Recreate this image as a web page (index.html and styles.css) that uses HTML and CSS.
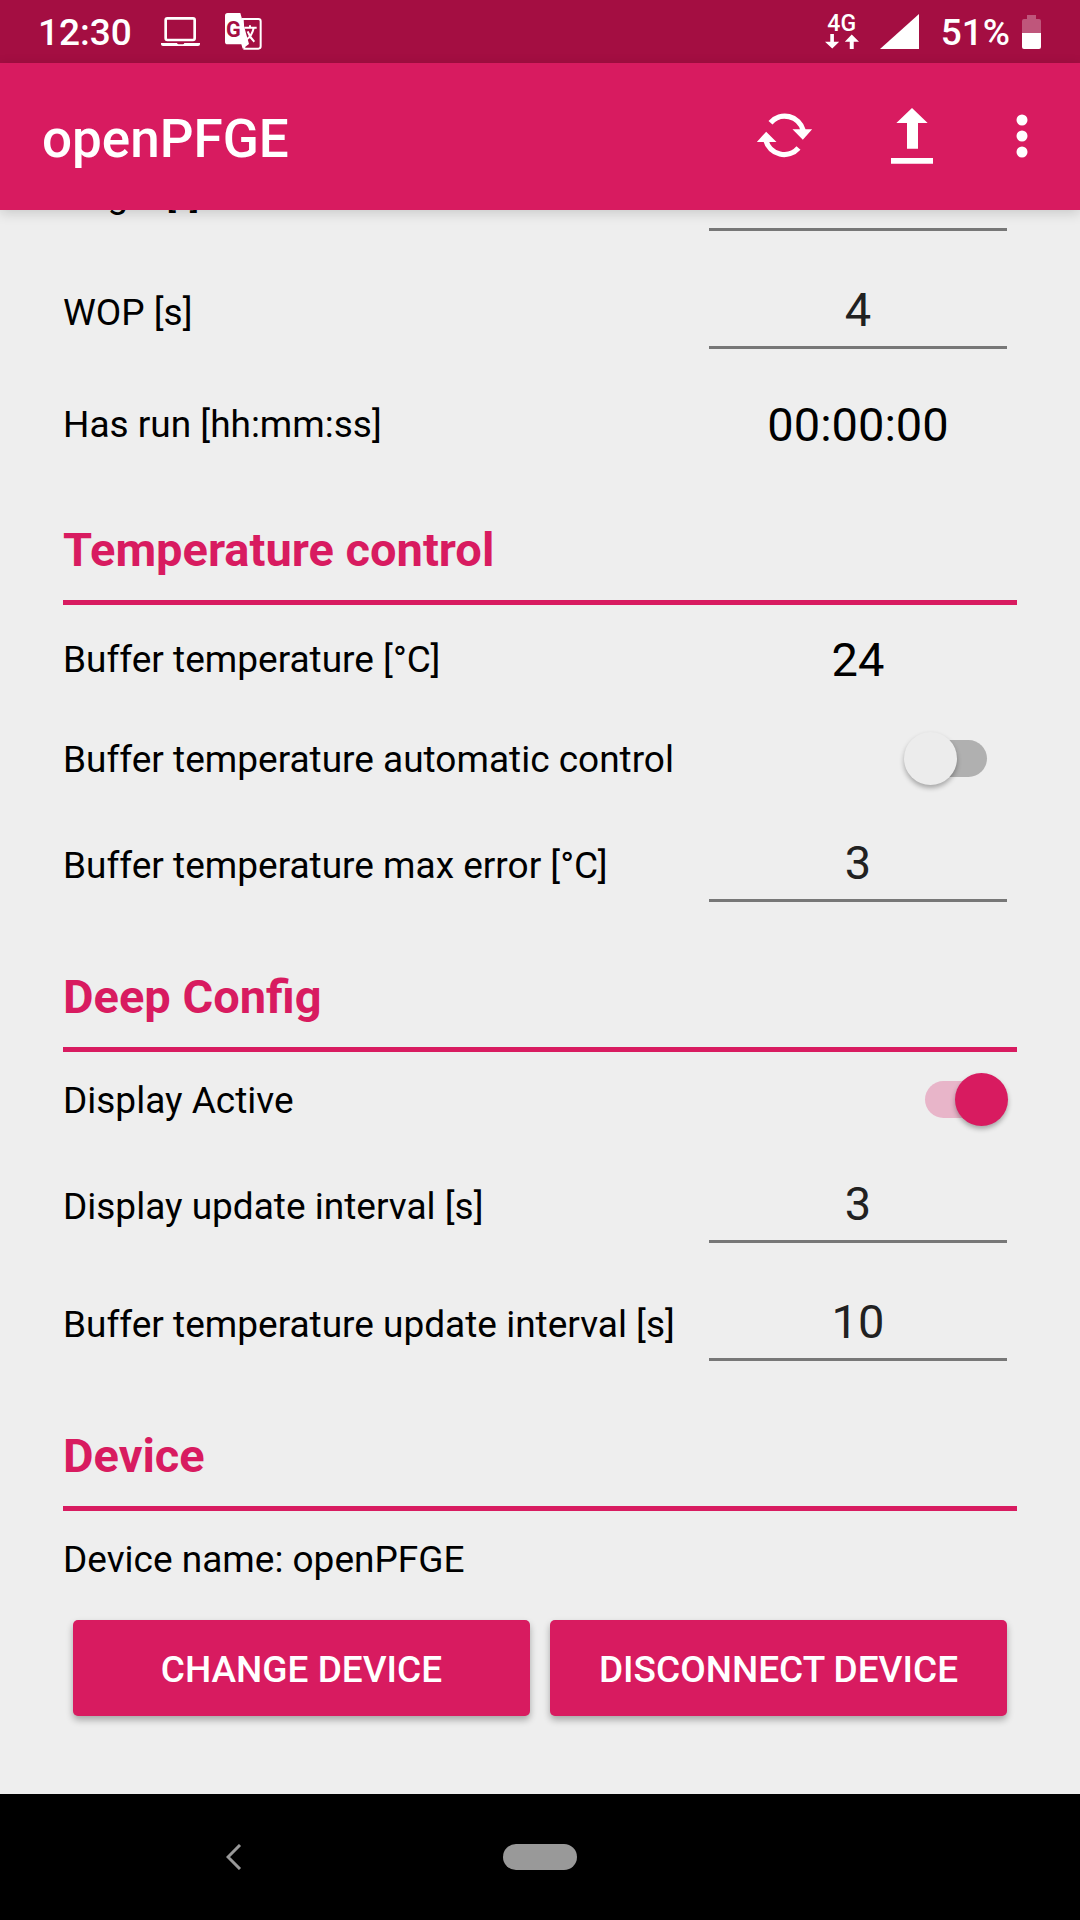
FILE: index.html
```html
<!DOCTYPE html>
<html lang="en">
<head>
<meta charset="utf-8">
<meta name="viewport" content="width=device-width, initial-scale=1">
<title>openPFGE</title>
<link rel="stylesheet" href="styles.css">
</head>
<body>
<div class="status">
  <span class="clock">12:30</span>
  <svg class="laptop" width="39" height="31" viewBox="483 48 117 93" aria-hidden="true">
    <rect x="497" y="55" width="87" height="65" rx="5" fill="none" stroke="#fff" stroke-width="8"/>
    <path d="M483 129h48q1 4 5 4h12q4 0 5-4h47v4q0 5-6 5H489q-6 0-6-5z" fill="#fff"/>
  </svg>
  <svg class="translate" width="37" height="37" viewBox="675 39 111 111" aria-hidden="true">
    <path d="M728 57h47q7 0 7 7v75q0 7-7 7h-42z" fill="none" stroke="#fff" stroke-width="6"/>
    <path d="M683 39h38l26 93-19 14-4-13h-41q-8 0-8-8V47q0-8 8-8z" fill="#fff"/>
    <path d="M733 83h37M750 76v7M761 84q-5 24-22 35M743 94q6 18 20 31" fill="none" stroke="#fff" stroke-width="6"/>
    <text class="translate-g" x="678" y="112">G</text>
  </svg>
  <div class="network">
    <span>4G</span>
    <svg width="34" height="15" viewBox="318 99 103 45" fill="#fff" aria-hidden="true">
      <path d="M334 99h11v23h16l-21 21-22-21h16zM393 144h12v-22h16l-22-22-21 22h15z"/>
    </svg>
  </div>
  <svg class="signal" width="39" height="35" viewBox="0 0 39 35" fill="#fff" aria-hidden="true"><path d="M39 0v35H0z"/></svg>
  <span class="percent">51%</span>
  <svg width="19" height="34" viewBox="0 0 19 34" fill="#fff" aria-hidden="true">
    <path d="M5 0h9v4h3q2 0 2 2v12H0V6q0-2 2-2h3z" opacity=".3"/>
    <path d="M0 18h19v14q0 2-2 2H2q-2 0-2-2z"/>
  </svg>
</div>
<header class="appbar">
  <h1 class="title">openPFGE</h1>
  <button class="action" type="button" aria-label="Refresh">
    <svg width="57" height="45" viewBox="108 337 170 135" aria-hidden="true">
      <path d="M151 366A57 57 0 0 1 249 389M235 442A57 57 0 0 1 137 419" fill="none" stroke="#fff" stroke-width="16"/>
      <path d="M217 386h59l-28 31zM169 424h-59l28-31z" fill="#fff"/>
    </svg>
  </button>
  <button class="action" type="button" aria-label="Upload">
    <svg width="42" height="56" viewBox="513 324 126 168" fill="#fff" aria-hidden="true">
      <path d="M576 324l47 45h-29v77h-33v-77h-32zM513 474h126v17H513z"/>
    </svg>
  </button>
  <button class="action more" type="button" aria-label="More options">
    <svg width="12" height="44" viewBox="0 0 12 44" fill="#fff" aria-hidden="true">
      <circle cx="6" cy="6" r="5.5"/><circle cx="6" cy="22" r="5.5"/><circle cx="6" cy="38" r="5.5"/>
    </svg>
  </button>
</header>
<main class="settings">
  <section class="pulse">
    <div class="row field"><label class="label" for="angle">Angle [°]</label><input class="entry" id="angle" type="text" inputmode="numeric"></div>
    <div class="row field"><label class="label" for="wop">WOP [s]</label><input class="entry" id="wop" type="text" inputmode="numeric" value="4"></div>
    <div class="row"><span class="label">Has run [hh:mm:ss]</span><output class="value">00:00:00</output></div>
  </section>
  <section>
    <h2 class="heading">Temperature control</h2>
    <div class="row"><span class="label">Buffer temperature [°C]</span><output class="value">24</output></div>
    <div class="row toggle"><label class="label" for="auto">Buffer temperature automatic control</label><input class="switch" id="auto" type="checkbox" role="switch"></div>
    <div class="row field"><label class="label" for="error">Buffer temperature max error [°C]</label><input class="entry" id="error" type="text" inputmode="numeric" value="3"></div>
  </section>
  <section>
    <h2 class="heading">Deep Config</h2>
    <div class="row toggle"><label class="label" for="display">Display Active</label><input class="switch" id="display" type="checkbox" role="switch" checked></div>
    <div class="row field"><label class="label" for="update">Display update interval [s]</label><input class="entry" id="update" type="text" inputmode="numeric" value="3"></div>
    <div class="row field"><label class="label" for="buffer">Buffer temperature update interval [s]</label><input class="entry" id="buffer" type="text" inputmode="numeric" value="10"></div>
  </section>
  <section>
    <h2 class="heading">Device</h2>
    <div class="row toggle"><p class="label">Device name: openPFGE</p></div>
    <div class="buttons">
      <button class="raised" type="button">CHANGE DEVICE</button>
      <button class="raised" type="button">DISCONNECT DEVICE</button>
    </div>
  </section>
</main>
<nav class="navbar" aria-label="System">
  <button class="nav-button" type="button" aria-label="Back">
    <svg width="16" height="26" viewBox="0 0 16 26" fill="none" stroke="#999" stroke-width="3" aria-hidden="true"><path d="M14 1L2 13l12 12"/></svg>
  </button>
  <button class="nav-button" type="button" aria-label="Home"><span class="pill"></span></button>
</nav>
</body>
</html>
```
FILE: styles.css
```css
* { box-sizing: border-box; }

body {
  margin: 0;
  min-height: 100vh;
  display: flex;
  flex-direction: column;
  background: #eee;
  color: #000;
  font-family: Roboto, "Noto Sans", sans-serif;
  font-size: 37px;
  line-height: 44px;
}

h1, h2, p { margin: 0; }

button, input { font-family: inherit; }

button {
  border: 0;
  padding: 0;
  background: none;
  color: #fff;
}

svg { display: block; flex: none; }

/* System status bar */
.status {
  height: 63px;
  padding: 0 39px 0 38px;
  display: flex;
  align-items: center;
  position: relative;
  z-index: 2;
  background: #a40e42;
  color: #fff;
  font-weight: 500;
}

.clock, .percent { padding-top: 3px; }
.laptop { margin-left: 29px; }
.translate { margin-left: 25px; }
.translate-g { font-size: 65px; font-weight: 700; fill: #a40e42; }

.network {
  margin-left: auto;
  display: flex;
  flex-direction: column;
  align-items: center;
  font-size: 23px;
  line-height: 20px;
}

.signal { margin-left: 21px; }
.percent { margin: 0 12px 0 22px; }

/* App bar */
.appbar {
  height: 147px;
  padding: 0 12px 0 42px;
  display: flex;
  align-items: stretch;
  position: relative;
  z-index: 2;
  background: #d81b60;
  color: #fff;
  box-shadow: 0 3px 12px rgba(0, 0, 0, .16);
}

.title {
  flex: 1;
  padding-top: 4px;
  align-self: center;
  font-size: 53px;
  line-height: 60px;
  font-weight: 500;
}

.action {
  width: 128px;
  padding-bottom: 2px;
  display: flex;
  align-items: center;
  justify-content: center;
}

.more { width: 92px; }

/* Settings list */
.settings {
  flex: 1;
  padding: 0 63px 78px;
}

/* The list is scrolled: its first row is half under the app bar */
.pulse { margin-top: -76px; }

.row {
  min-height: 106px;
  display: flex;
  align-items: center;
  justify-content: space-between;
}

.field { min-height: 118px; }
.toggle { min-height: 94px; }

.label, .value { padding-top: 3px; }

.entry, .value {
  width: 298px;
  margin-right: 10px;
  text-align: center;
  font-size: 47px;
}

.entry {
  height: 76px;
  padding: 0 0 3px;
  border: solid transparent;
  border-width: 3px 0;
  border-bottom-color: #777;
  border-radius: 0;
  outline: 0;
  background: none;
  color: #212121;
}

.heading {
  padding: 44px 0 20px;
  border-bottom: 5px solid #d81b60;
  color: #d81b60;
  font-size: 47px;
  line-height: 60px;
  font-weight: 700;
}

.switch {
  appearance: none;
  width: 104px;
  height: 53px;
  margin: 0 9px 0 0;
  display: flex;
  align-items: center;
}

.switch::before {
  content: "";
  width: 62px;
  height: 37px;
  margin-left: 21px;
  border-radius: 19px;
  background: #b0b0b0;
}

.switch::after {
  content: "";
  width: 53px;
  height: 53px;
  margin-left: -83px;
  border-radius: 50%;
  background: #ececec;
  box-shadow: 0 3px 5px rgba(0, 0, 0, .3);
}

.switch:checked::before { background: #e8b5c9; }
.switch:checked::after { margin-left: -32px; background: #d81b60; }

.buttons {
  padding: 15px 10px 0;
  display: grid;
  grid-template-columns: 1fr 1fr;
  gap: 20px;
}

.raised {
  height: 96px;
  padding-top: 2px;
  border-radius: 5px;
  background: #d81b60;
  box-shadow: 0 4px 7px rgba(0, 0, 0, .3);
  font-size: 37px;
  font-weight: 500;
}

/* System navigation */
.navbar {
  height: 126px;
  display: grid;
  grid-template-columns: 1fr 146px 1fr;
  background: #000;
}

.nav-button {
  display: flex;
  align-items: center;
  justify-content: center;
}

.pill {
  width: 74px;
  height: 26px;
  border-radius: 13px;
  background: #999;
}
```
